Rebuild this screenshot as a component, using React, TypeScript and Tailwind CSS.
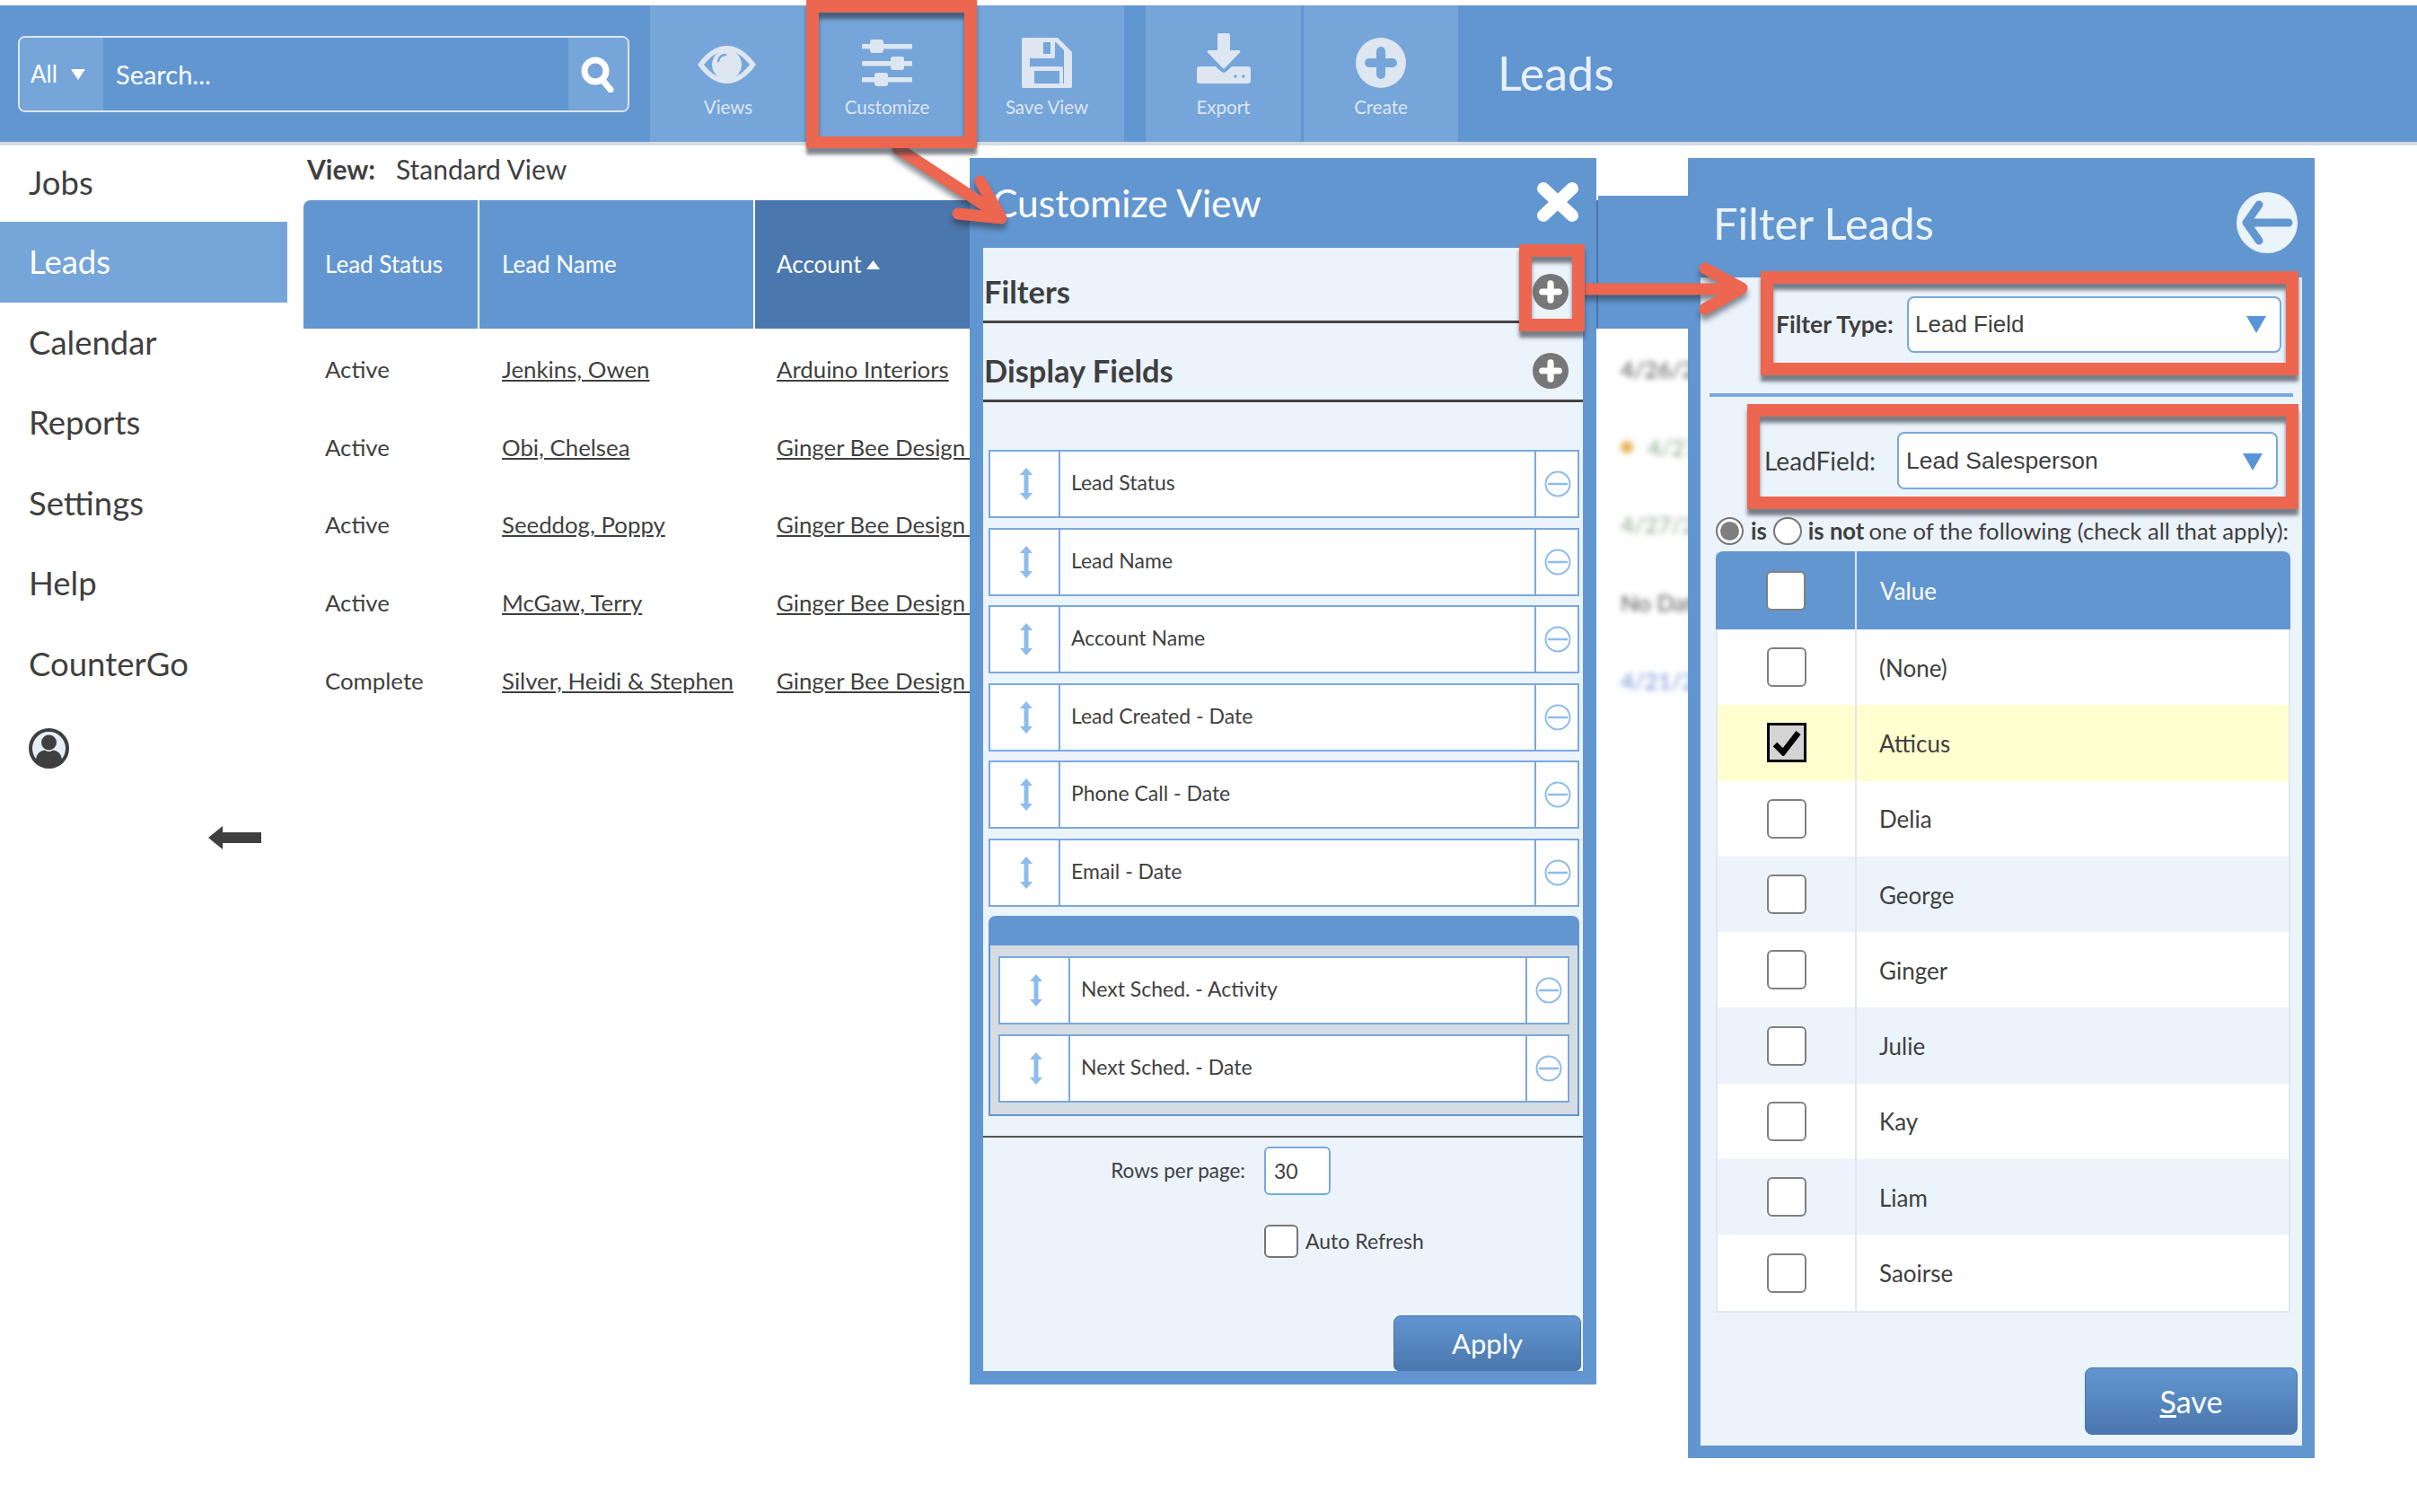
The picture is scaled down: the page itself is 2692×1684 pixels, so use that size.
import React from "react";

const BLUE = "bg-[#6296d1]";

function EyeIcon() {
  return (
    <svg width="65" height="42" viewBox="0 0 65 42" className="translate-y-[2px] -translate-x-[2px]">
      <path
        fillRule="evenodd"
        fill="#dde6f1"
        d="M0 21C10 7 21 0 32.5 0S55 7 65 21C55 35 44 42 32.5 42S10 35 0 21ZM7 21C15 31 23 36 32.5 36S50 31 58 21C50 11 42 6 32.5 6S15 11 7 21Z"
      />
      <circle cx="32.5" cy="21" r="16.5" fill="#dde6f1" />
      <path d="M23 17c1-4 4-7 8-7" stroke="#76a5d9" strokeWidth="2.5" fill="none" strokeLinecap="round" />
    </svg>
  );
}

function SlidersIcon() {
  return (
    <svg width="56" height="52" viewBox="0 0 56 52" fill="#dde6f1">
      <rect x="0" y="5" width="56" height="5.5" rx="1" />
      <rect x="0" y="24" width="56" height="5.5" rx="1" />
      <rect x="0" y="42" width="56" height="5.5" rx="1" />
      <rect x="9" y="0" width="15" height="15" rx="3" />
      <rect x="32" y="19" width="15" height="15" rx="3" />
      <rect x="14" y="37" width="15" height="15" rx="3" />
    </svg>
  );
}

function SaveIcon() {
  return (
    <svg width="56" height="56" viewBox="0 0 56 56">
      <path fill="#dde6f1" d="M2 0H40L56 16V54a2 2 0 0 1-2 2H2a2 2 0 0 1-2-2V2A2 2 0 0 1 2 0Z" />
      <path fill="#76a5d9" d="M9 5H38L47 14V51H9Z" />
      <rect x="9" y="1" width="28" height="22" rx="2" fill="#dde6f1" />
      <rect x="24" y="5" width="8" height="13" fill="#76a5d9" />
      <rect x="9" y="32" width="37" height="20" rx="2" fill="#dde6f1" />
      <rect x="14" y="37" width="28" height="14" fill="#76a5d9" />
    </svg>
  );
}

function ExportIcon() {
  return (
    <svg width="60" height="56" viewBox="0 0 60 56" className="-translate-y-[5px]">
      <path
        fill="#dde6f1"
        d="M23 2a2 2 0 0 1 2-2H35a2 2 0 0 1 2 2V19H47a1.5 1.5 0 0 1 1 2.5L31 39a1.5 1.5 0 0 1-2 0L12 21.500A1.500 1.500 0 0 1 13 19H23Z"
      />
      <path
        fill="#dde6f1"
        d="M3 37H21L27 42.500a4 4 0 0 0 6 0L39 37H57a3 3 0 0 1 3 3V53a3 3 0 0 1-3 3H3a3 3 0 0 1-3-3V40a3 3 0 0 1 3-3Z"
      />
      <circle cx="43" cy="48" r="1.700" fill="#76a5d9" />
      <circle cx="52" cy="48" r="1.700" fill="#76a5d9" />
    </svg>
  );
}

function PlusCircle({ size, fill, cross }: { size: number; fill: string; cross: string }) {
  return (
    <svg width={size} height={size} viewBox="0 0 56 56">
      <circle cx="28" cy="28" r="28" fill={fill} />
      <path d="M28 15V41M15 28H41" stroke={cross} strokeWidth="10" strokeLinecap="round" />
    </svg>
  );
}

function MoveIcon() {
  return (
    <svg width="14" height="36" viewBox="0 0 14 36" fill="#8ebcec">
      <path d="M7 0L14 8H0Z" />
      <rect x="4.500" y="6" width="5" height="24" />
      <path d="M7 36L14 28H0Z" />
    </svg>
  );
}

function MinusCircle() {
  return (
    <svg width="30" height="30" viewBox="0 0 30 30" fill="none" stroke="#8ebcec" strokeWidth="2">
      <circle cx="15" cy="15" r="13.500" />
      <path d="M4 15H26" strokeWidth="2.500" />
    </svg>
  );
}

function ToolButton({
  label,
  width,
  children,
}: {
  label: string;
  width: string;
  children: React.ReactNode;
}) {
  return (
    <div className={`${width} h-full bg-[#76a5d9] flex flex-col items-center pt-[36px]`}>
      <div className="h-[56px] flex items-center justify-center">{children}</div>
      <div className="mt-[8px] text-[20.5px] leading-[26px] text-[#dde6f1]">{label}</div>
    </div>
  );
}

function SideItem({ label, active }: { label: string; active?: boolean }) {
  return (
    <div
      className={`flex items-center pl-[32px] pb-[1px] text-[36.5px] ${
        active ? "bg-[#76a5d9] text-white h-[90px]" : "h-[89.5px] text-[#3f3f3f]"
      }`}
    >
      {label}
    </div>
  );
}

function FieldRow({ label, wide }: { label: string; wide?: boolean }) {
  return (
    <div className="h-[76px] flex bg-white border-2 border-[#7aa8de] text-[23px] text-[#3f3f3f]">
      <div className="w-[78px] flex items-center justify-center border-r-2 border-[#7aa8de] pl-[4px]">
        <MoveIcon />
      </div>
      <div className="flex-1 flex items-center pl-[12px] pb-[3px]">{label}</div>
      <div
        className={`${wide ? "w-[47px]" : "w-[48px]"} flex items-center justify-center border-l-2 border-[#7aa8de] pl-[2px]`}
      >
        <MinusCircle />
      </div>
    </div>
  );
}

function Checkbox({ checked }: { checked?: boolean }) {
  if (checked) {
    return (
      <div className="w-[44px] h-[44px] border-[3px] border-black bg-[#d4d4d4] flex items-center justify-center">
        <svg width="32" height="30" viewBox="0 0 32 30" fill="none">
          <path d="M3 17L12 26L29 4" stroke="#000" strokeWidth="6.500" />
        </svg>
      </div>
    );
  }
  return <div className="w-[44px] h-[44px] rounded-md border-2 border-[#808080] bg-white" />;
}

function Caret() {
  return (
    <svg width="22" height="19" viewBox="0 0 22 19">
      <path d="M0 0H22L11 19Z" fill="#5a94d8" />
    </svg>
  );
}

function RedBox({ className }: { className: string }) {
  return (
    <div
      className={`absolute border-[#ec6650] shadow-[0_7px_4px_rgba(40,50,60,0.6),inset_0_7px_4px_rgba(40,50,60,0.6)] ${className}`}
    />
  );
}

// the account names run on under the Customize panel, only the underline shows past "Design"
const leads = [
  ["Active", "Jenkins, Owen", "Arduino Interiors"],
  ["Active", "Obi, Chelsea", "Ginger Bee Design\u00a0"],
  ["Active", "Seeddog, Poppy", "Ginger Bee Design\u00a0"],
  ["Active", "McGaw, Terry", "Ginger Bee Design\u00a0"],
  ["Complete", "Silver, Heidi & Stephen", "Ginger Bee Design\u00a0"],
];

const filterValues = ["(None)", "Atticus", "Delia", "George", "Ginger", "Julie", "Kay", "Liam", "Saoirse"];

export default function App() {
  return (
    <div className="relative w-[2692px] h-[1684px] overflow-hidden bg-white pt-[6px] font-[family-name:Lato,sans-serif] text-[#3f3f3f]">
      {/* Top bar */}
      <div className={`h-[152px] flex ${BLUE}`}>
        <div className="w-[724px] pl-[20px] pt-[34px]">
          <div className="w-[681px] h-[85px] flex border-2 border-[#dde6f1] rounded-lg overflow-hidden text-white">
            <div className="w-[93px] bg-[#76a5d9] flex items-center pl-[12px] gap-[15px] text-[26px]">
              All
              <svg width="16" height="12" viewBox="0 0 16 12">
                <path d="M0 0H16L8 12Z" fill="#fff" />
              </svg>
            </div>
            <div className="flex-1 flex items-center pl-[14px] text-[29px]">Search...</div>
            <div className="w-[66px] bg-[#76a5d9] flex items-center justify-center">
              <svg width="38" height="40" viewBox="0 0 38 40" fill="none" stroke="#fff">
                <circle cx="16" cy="16" r="12" strokeWidth="7" />
                <path d="M24 26L33 37" strokeWidth="7" strokeLinecap="round" />
              </svg>
            </div>
          </div>
        </div>
        <ToolButton label="Views" width="w-[174px]">
          <EyeIcon />
        </ToolButton>
        <ToolButton label="Customize" width="w-[190px] pr-[10px]">
          <SlidersIcon />
        </ToolButton>
        <ToolButton label="Save View" width="w-[164px] pr-[8px]">
          <SaveIcon />
        </ToolButton>
        <div className="w-[24px]" />
        <ToolButton label="Export" width="w-[173px]">
          <ExportIcon />
        </ToolButton>
        <div className="w-[3px]" />
        <ToolButton label="Create" width="w-[172px]">
          <PlusCircle size={56} fill="#dde6f1" cross="#76a5d9" />
        </ToolButton>
        <div className="pl-[44px] pb-[3px] flex items-center text-[52px] text-[#e8f0f9]">Leads</div>
      </div>
      <div className="h-[4px] bg-[#d5dce4]" />

      <div className="flex">
        {/* Sidebar */}
        <div className="w-[320px] shrink-0">
          <div className="h-[85px] flex items-center pl-[32px] pb-[3px] text-[36.5px]">Jobs</div>
          <SideItem label="Leads" active />
          <SideItem label="Calendar" />
          <SideItem label="Reports" />
          <SideItem label="Settings" />
          <SideItem label="Help" />
          <SideItem label="CounterGo" />
          <div className="pl-[32px] mt-[26px]">
            <svg width="45" height="45" viewBox="0 0 45 45">
              <circle cx="22.500" cy="22.500" r="20.500" fill="#e4edf8" stroke="#3f3f3f" strokeWidth="4" />
              <circle cx="22.500" cy="16" r="8.500" fill="#3f3f3f" />
              <path d="M8 35c1-8 6-10 10-10.500c3 2 6 2 9 0c4 .5 9 2.500 10 10.500c-8 9-21 9-29 0Z" fill="#3f3f3f" />
            </svg>
          </div>
          <div className="pl-[232px] mt-[64px]">
            <svg width="59" height="26" viewBox="0 0 59 26" fill="#3f3f3f">
              <path d="M0 13L16 0V7H59V19H16V26Z" />
            </svg>
          </div>
        </div>

        {/* Lead table */}
        <div className="flex-1 pl-[18px]">
          <div className="h-[56px] flex items-center pl-[4px] pb-[4px] text-[30px]">
            <span className="font-bold w-[99px]">View:</span>
            <span>Standard View</span>
          </div>
          <div className="w-[1542px] flex items-end text-[26px] text-white">
            <div className="w-[194px] h-[143px] shrink-0 bg-[#6296d1] rounded-tl-lg flex items-center pl-[24px]">
              Lead Status
            </div>
            <div className="w-[305px] h-[143px] shrink-0 ml-[2px] bg-[#6296d1] flex items-center pl-[25px]">
              Lead Name
            </div>
            <div className="w-[939px] h-[143px] shrink-0 ml-[2px] bg-[#4a77ad] flex items-center pl-[24px] gap-[5px]">
              Account
              <svg width="15" height="10" viewBox="0 0 15 10">
                <path d="M7.500 0L15 10H0Z" fill="#fff" />
              </svg>
            </div>
            <div className="w-[100px] h-[148px] shrink-0 bg-[#6296d1]" />
          </div>
          <div className="pt-[2px]">
            {leads.map((row, i) => (
              <div key={row[1]} className="w-[1542px] h-[86.7px] flex items-center text-[25.8px] whitespace-nowrap">
                <div className="w-[196px] shrink-0 pl-[24px]">{row[0]}</div>
                <div className="w-[307px] shrink-0 pl-[25px] underline">{row[1]}</div>
                <div className="w-[240px] shrink-0 pl-[24px] underline">{row[2]}</div>
                <div className="pl-[724px] shrink-0 blur-[3px] flex items-center gap-[16px]">
                  {i === 1 && <span className="w-[14px] h-[14px] rounded-full bg-[#e9b35a]" />}
                  <span className={i === 1 || i === 2 ? "text-[#8aa88a]" : i === 4 ? "text-[#6f8fd8]" : "text-[#555]"}>
                    {["4/26/2021", "4/27/2021", "4/27/2021", "No Date", "4/21/2021"][i]}
                  </span>
                </div>
              </div>
            ))}
          </div>
        </div>
      </div>

      {/* Customize View panel */}
      <div className="absolute left-[1080px] top-[176px] w-[698px] h-[1366px] bg-[#6296d1] flex flex-col px-[15px] pb-[15px]">
        <div className="h-[100px] shrink-0 flex items-center justify-between pl-[10px] pr-[4px] text-[42.5px] text-white">
          Customize View
          <svg width="48" height="44" viewBox="0 0 48 44" className="-mt-[2px]">
            <path d="M8 7L40 37M40 7L8 37" stroke="#fff" strokeWidth="14" strokeLinecap="round" />
          </svg>
        </div>
        <div className="flex-1 bg-[#ebf3fb] flex flex-col">
          <div className="h-[84px] shrink-0 flex items-center justify-between pl-[1px] pr-[16px] pt-[16px] border-b-[3px] border-[#444] text-[34.5px] font-bold">
            Filters
            <PlusCircle size={40} fill="#777" cross="#fff" />
          </div>
          <div className="h-[88px] shrink-0 flex items-center justify-between pl-[1px] pr-[16px] pt-[20px] border-b-[3px] border-[#444] text-[34.5px] font-bold">
            Display Fields
            <PlusCircle size={40} fill="#777" cross="#fff" />
          </div>
          <div className="ml-[6px] mr-[4px] mt-[53px] flex flex-col gap-[10.500px]">
            {["Lead Status", "Lead Name", "Account Name", "Lead Created - Date", "Phone Call - Date", "Email - Date"].map(
              (f) => (
                <FieldRow key={f} label={f} />
              )
            )}
            <div className="h-[223px] rounded-t-lg border-2 border-[#6296d1] bg-[#d5dce4]">
              <div className="h-[31px] bg-[#6296d1]" />
              <div className="px-[9px] pt-[12px] flex flex-col gap-[11px]">
                <FieldRow label="Next Sched. - Activity" wide />
                <FieldRow label="Next Sched. - Date" wide />
              </div>
            </div>
          </div>
          <div className="mt-[22px] border-t-[2px] border-[#555]" />
          <div className="mt-[10px] flex items-center text-[22.5px]">
            <div className="w-[292px] text-right">Rows per page:</div>
            <div className="ml-[21px] w-[74px] h-[54px] rounded-md border-2 border-[#7aa8de] bg-white flex items-center pl-[9px] text-[23px]">
              30
            </div>
          </div>
          <div className="mt-[33px] ml-[313px] flex items-center gap-[8px] text-[23px]">
            <div className="w-[38px] h-[37px] rounded-md border-2 border-[#777] bg-white" />
            Auto Refresh
          </div>
          <div className="mt-auto self-end mr-[2px] w-[209px] h-[62px] rounded-t-lg rounded-b-md border border-[#4a77ad] bg-gradient-to-b from-[#6296d1] to-[#4a77ad] flex items-center justify-center text-[31px] text-white">
            Apply
          </div>
        </div>
      </div>

      {/* Filter Leads panel */}
      <div className="absolute left-[1880px] top-[176px] w-[698px] h-[1448px] bg-[#6296d1] flex flex-col px-[14px] pb-[14px]">
        <div className="h-[133px] shrink-0 flex items-center justify-between pl-[14px] pr-[5px] pt-[12px] text-[49px] text-[#ebf3fb]">
          Filter Leads
          <svg width="68" height="68" viewBox="0 0 68 68" className="-mt-[2px]">
            <circle cx="34" cy="34" r="34" fill="#ebf3fb" />
            <path
              d="M25 14L11 34L25 54M13 34H58"
              fill="none"
              stroke="#6296d1"
              strokeWidth="9"
              strokeLinecap="round"
              strokeLinejoin="round"
            />
          </svg>
        </div>
        <div className="flex-1 bg-[#ebf3fb] flex flex-col">
          <div className="mt-[21px] flex items-center h-[63px]">
            <div className="w-[230px] pl-[84px] text-[26.5px] font-bold whitespace-nowrap">Filter Type:</div>
            <div className="w-[417px] h-[63px] rounded-lg border-2 border-[#7aa8de] bg-white flex items-center justify-between pl-[7px] pr-[15px] text-[26px] font-['Liberation_Sans',sans-serif]">
              Lead Field
              <Caret />
            </div>
          </div>
          <div className="mt-[45px] mx-[10px] h-[4px] bg-[#7aa8de]" />
          <div className="mt-[39px] flex items-center h-[64px]">
            <div className="w-[219px] pl-[71px] text-[28px] whitespace-nowrap">LeadField:</div>
            <div className="w-[424px] h-[64px] rounded-lg border-2 border-[#7aa8de] bg-white flex items-center justify-between pl-[8px] pr-[15px] pt-[2px] text-[26.5px] font-['Liberation_Sans',sans-serif]">
              Lead Salesperson
              <Caret />
            </div>
          </div>
          <div className="mt-[31px] ml-[17px] h-[31px] flex items-center text-[25.7px] whitespace-nowrap">
            <div className="w-[31px] h-[31px] rounded-full border-2 border-[#777] bg-white flex items-center justify-center">
              <div className="w-[21px] h-[21px] rounded-full bg-[#7f7f7f]" />
            </div>
            <span className="ml-[8px] font-bold">is</span>
            <div className="ml-[7px] w-[32px] h-[31px] rounded-full border-2 border-[#777] bg-white" />
            <span className="ml-[7px] font-bold">is not</span>
            <span className="ml-[5px]">one of the following (check all that apply):</span>
          </div>
          <div className="mt-[7px] ml-[17px] w-[640px] border-b-2 border-x-2 border-[#dfe8f2]">
            <div className="h-[87px] -mx-[2px] flex rounded-t-lg bg-[#6296d1] text-[26px] text-white">
              <div className="w-[157px] flex items-center justify-center border-r-2 border-[#dfe8f2]">
                <Checkbox />
              </div>
              <div className="flex-1 flex items-center pl-[26px] pt-[1px]">Value</div>
            </div>
            {filterValues.map((v, i) => (
              <div
                key={v}
                className={`h-[84.3px] flex text-[26px] ${
                  v === "Atticus" ? "bg-[#ffffd0]" : i === 3 || i === 5 || i === 7 ? "bg-[#ebf3fb]" : "bg-white"
                }`}
              >
                <div className="w-[155px] flex items-center justify-center border-r-2 border-[#dfe8f2]">
                  <Checkbox checked={v === "Atticus"} />
                </div>
                <div className="flex-1 flex items-center pl-[25px] pt-[2px]">{v}</div>
              </div>
            ))}
          </div>
          <div className="mt-auto self-end mr-[5px] mb-[12px] w-[237px] h-[75px] rounded-lg border border-[#4a77ad] bg-gradient-to-b from-[#6296d1] to-[#4a77ad] flex items-center justify-center text-[34px] text-white">
            <span>
              <span className="underline">S</span>ave
            </span>
          </div>
        </div>
      </div>

      {/* Annotation arrows and boxes */}
      <svg
        width="2692"
        height="1684"
        viewBox="0 0 2692 1684"
        className="absolute left-0 top-0 pointer-events-none drop-shadow-[0_6px_3px_rgba(40,50,60,0.55)]"
        fill="none"
        stroke="#ec6650"
        strokeWidth="13"
        strokeLinejoin="round"
        strokeLinecap="round"
      >
        <path d="M1000 165L1108 236" />
        <path d="M1092 202L1115 243L1067 238" />
        <path d="M1765 322H1936" />
        <path d="M1899 299L1940 321L1899 344" />
      </svg>
      <RedBox className="left-[898px] top-0 w-[190px] h-[165px] border-x-[14px] border-t-[14px] border-b-[13px]" />
      <RedBox className="left-[1692px] top-[272px] w-[73px] h-[97px] border-x-[14px] border-t-[14px] border-b-[14px]" />
      <RedBox className="left-[1961px] top-[302px] w-[599px] h-[116px] border-x-[14px] border-t-[14px] border-b-[14px]" />
      <RedBox className="left-[1946px] top-[450px] w-[614px] h-[117px] border-x-[14px] border-t-[14px] border-b-[14px]" />
    </div>
  );
}
